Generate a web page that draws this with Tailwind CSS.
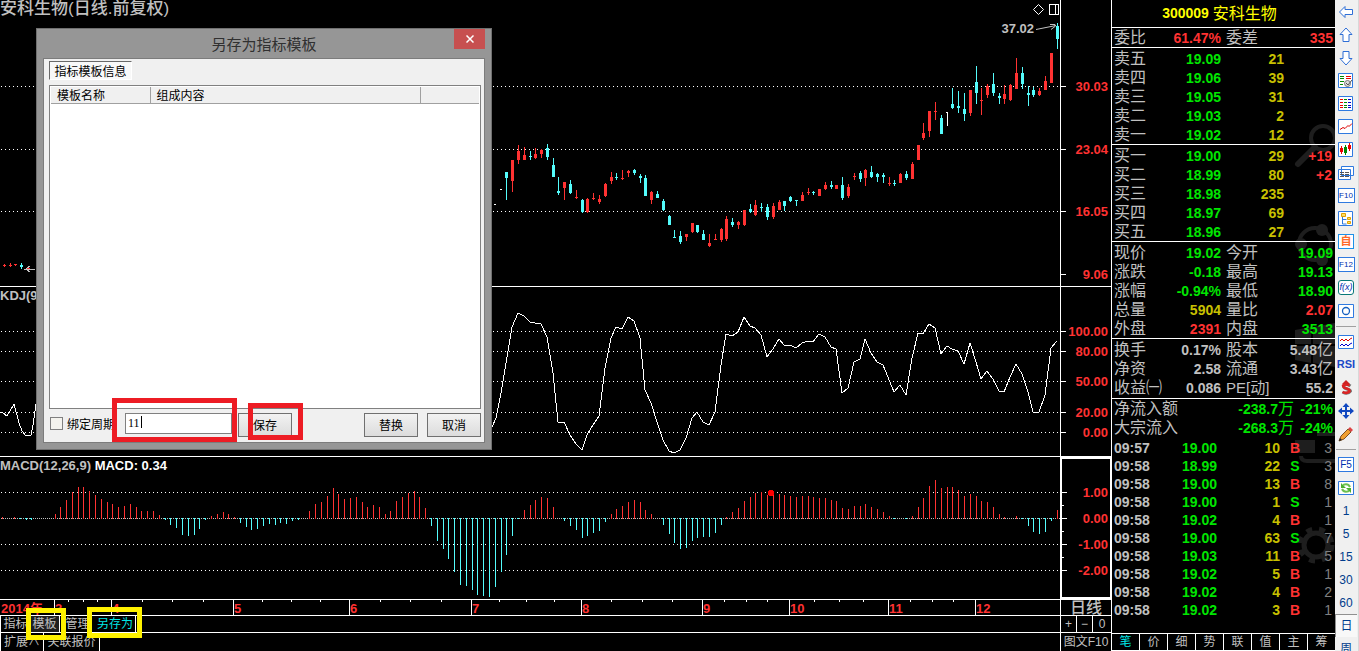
<!DOCTYPE html>
<html lang="zh-CN">
<head>
<meta charset="utf-8">
<title>安科生物 日线</title>
<script src="https://cdn.jsdelivr.net/npm/@tailwindcss/browser@4"></script>
</head>
<body class="h-screen overflow-hidden bg-black font-['Liberation_Sans','Noto_Sans_CJK_SC',sans-serif] text-[#c0c0c0]">
<div class="relative flex h-full overflow-hidden">

  <!-- Charts -->
  <main class="flex min-w-0 flex-1 flex-col">
    <section class="relative flex h-[287px] shrink-0 border-b border-white">
      <h1 class="absolute left-0 top-0 text-[17px] leading-[18px] font-medium">安科生物(日线.前复权)</h1>
      <div class="absolute right-[53px] top-[4px] flex items-center gap-[5px]">
        <svg width="11" height="11" viewBox="0 0 11 11" fill="none" stroke="#fff"><path d="M5.5 .5l5 5-5 5-5-5z"/></svg>
        <svg width="10" height="11" viewBox="0 0 10 11" fill="none" stroke="#fff" shape-rendering="crispEdges"><path d="M.5.5h9v10h-9zM6.500.5v10"/></svg>
      </div>
      <div class="absolute right-[52px] top-[20px] flex items-center">
        <span class="text-[13px] leading-[18px] font-bold">37.02</span>
        <svg width="26" height="14" viewBox="0 0 26 14" fill="none" stroke="#c0c0c0"><path d="M2 7.500L22 3.500M16 2.500h5v2l-4 3"/></svg>
      </div>
      <svg id="price" class="h-full min-w-0 flex-1" viewBox="0 0 1060 286" preserveAspectRatio="none" shape-rendering="crispEdges"></svg>
      <svg id="priceAxis" class="h-full w-[52px] border-x border-white" shape-rendering="crispEdges"></svg>
    </section>

    <section class="relative flex h-[170px] shrink-0 border-b border-white">
      <h2 class="absolute left-0 top-0 text-[13px] leading-[18px] font-bold">KDJ(9,3,3)</h2>
      <svg id="kdj" class="h-full min-w-0 flex-1" viewBox="0 287 1060 169" preserveAspectRatio="none" shape-rendering="crispEdges"></svg>
      <svg id="kdjAxis" class="h-full w-[52px] border-x border-white" shape-rendering="crispEdges"></svg>
    </section>

    <section class="relative flex h-[143px] shrink-0 border-b border-white">
      <h2 class="absolute left-0 top-0 text-[13px] leading-[18px] font-bold">MACD(12,26,9) <span class="text-white">MACD: 0.34</span></h2>
      <svg id="macd" class="h-full min-w-0 flex-1" viewBox="0 457 1060 142" preserveAspectRatio="none" shape-rendering="crispEdges"></svg>
      <svg id="macdAxis" class="h-full w-[52px] border-2 border-white" shape-rendering="crispEdges"></svg>
    </section>

    <section class="flex h-[16px] shrink-0 border-b border-white">
      <svg id="months" class="h-full min-w-0 flex-1" shape-rendering="crispEdges"></svg>
      <div class="flex w-[52px] items-center justify-center border-x border-white text-base leading-none font-medium">日线</div>
    </section>

    <section class="flex h-[17px] shrink-0 border-b border-white text-xs leading-4">
      <nav class="flex min-w-0 flex-1 border-l border-white">
        <button class="w-[29px]">指标</button>
        <button class="w-[30px] border-r border-white bg-[#202020]">模板</button>
        <button class="w-[35px]">管理</button>
        <button class="w-[41px] border-r border-white text-[#00e6e6]">另存为</button>
      </nav>
      <div class="flex w-[52px] divide-x divide-white border-x border-white">
        <button class="w-4">+</button><button class="w-4">−</button><button class="flex-1">0</button>
      </div>
    </section>

    <section class="flex min-h-0 flex-1 text-xs leading-[18px]">
      <nav class="flex min-w-0 flex-1 border-l border-white">
        <button class="w-[43px] border-r border-white">扩展∧</button>
        <button class="w-[56px] border-r border-white">关联报价</button>
      </nav>
      <button class="w-[52px] border-x border-white">图文F10</button>
    </section>
  </main>

  <!-- Quote panel -->
  <aside class="relative flex w-[223px] shrink-0 flex-col text-base leading-[19px]">
    <svg class="absolute right-0 top-0" width="44" height="600" viewBox="0 0 44 600" fill="none" stroke="#1e1e1e">
      <circle cx="32" cy="138" r="12" stroke-width="4"/><path d="M24 147L7 164" stroke-width="6" stroke-linecap="round"/>
      <circle cx="24" cy="244" r="16" stroke-width="4"/><g fill="#1e1e1e" stroke="none"><circle cx="31" cy="230" r="6"/><circle cx="10" cy="244" r="6"/><circle cx="31" cy="260" r="6"/>
      <path d="M4 330l16-3v17H4zM22 327l22-4v21H22zM4 346h16v17l-16-3zM22 346h22v21l-22-4z"/><path d="M4 440h20v13H4z"/></g>
      <path d="M10 456q0 5 6 5h28M26 434h18" stroke-width="4"/>
      <circle cx="25" cy="545" r="12" stroke-width="5"/><circle cx="25" cy="545" r="16" stroke-width="5" stroke-dasharray="6 7"/>
    </svg>
    <h2 class="relative flex h-7 shrink-0 items-center justify-center gap-1 border-b border-white pr-2 text-[#ffff00]"><span class="text-[14px] font-bold">300009</span>安科生物</h2>
    <div id="quotes" class="relative shrink-0"></div>
    <table id="ticks" class="relative mt-[2px] w-full shrink-0 table-fixed text-[14px] leading-[18px] font-bold">
      <colgroup><col class="w-[46px]"><col class="w-[59px]"><col class="w-[63px]"><col class="w-[30px]"><col></colgroup>
      <tbody></tbody>
    </table>
    <nav class="mt-auto flex shrink-0 divide-x divide-white border-y border-white text-xs leading-4">
      <button class="flex-1 text-[#00e6e6]">笔</button><button class="flex-1">价</button><button class="flex-1">细</button><button class="flex-1">势</button><button class="flex-1">联</button><button class="flex-1">值</button><button class="flex-1">主</button><button class="flex-1">筹</button>
    </nav>
  </aside>

  <!-- Tool strip -->
  <nav class="flex w-6 shrink-0 flex-col border-r border-[#d8d8d8] bg-[#f0f0f0] pr-px text-xs text-[#003c8c]">
    <button aria-label="后退" class="grid h-[23px] shrink-0 place-items-center"><svg width="16" height="16" viewBox="0 0 16 16" fill="#fff" stroke="#2f6fd6"><path d="M1.500 8L7 2.500v3h7.500v5H7v3z"/></svg></button>
    <button aria-label="上移" class="grid h-[23px] shrink-0 place-items-center"><svg width="16" height="16" viewBox="0 0 16 16" fill="#fff" stroke="#2f6fd6"><path d="M8 1L2 7.500h3v7h6v-7h3z"/></svg></button>
    <button aria-label="下移" class="grid h-[23px] shrink-0 place-items-center"><svg width="16" height="16" viewBox="0 0 16 16" fill="#fff" stroke="#2f6fd6"><path d="M8 15L2 8.500h3v-7h6v7h3z"/></svg></button>
    <button aria-label="报价设置" class="grid h-[23px] shrink-0 place-items-center"><svg width="16" height="16" viewBox="0 0 16 16" fill="none"><path d="M.5.5h14v14H.5z" fill="#fff" stroke="#2f7ae0"/><path d="M2 3.500h4M2 5.500h4M2 8.500h4M2 11.500h3" stroke="#080"/><path d="M8 3.500h5M8 5.500h5" stroke="#e00"/><circle cx="9.500" cy="10.500" r="3" fill="#ddd" stroke="#777"/><path d="M8 10l2 2 4-5" stroke="#555"/></svg></button>
    <button aria-label="报价列表" class="grid h-[23px] shrink-0 place-items-center"><svg width="16" height="16" viewBox="0 0 16 16" fill="none"><path d="M.5.5h14v14H.5z" fill="#fff" stroke="#2f7ae0"/><path d="M2 3.500h3M2 6.500h3M2 9.500h3M2 11.500h3" stroke="#e00"/><path d="M6 3.500h3M6 6.500h3M6 9.500h3M6 11.500h3" stroke="#080"/><path d="M10 3.500h3M10 6.500h3M10 9.500h3M10 11.500h3" stroke="#00c"/></svg></button>
    <button aria-label="分时图" class="grid h-[23px] shrink-0 place-items-center"><svg width="16" height="16" viewBox="0 0 16 16" fill="none"><path d="M.5.5h14v14H.5z" fill="#fff" stroke="#2f7ae0"/><path d="M2 10.500l3-2 2 1 3-3 1 1 3-3" stroke="#d00"/></svg></button>
    <button aria-label="K线图" class="grid h-[23px] shrink-0 place-items-center"><svg width="16" height="16" viewBox="0 0 16 16" fill="none"><path d="M.5.5h14v14H.5z" fill="#fff" stroke="#2f7ae0"/><path d="M3.500 4v8M11.500 1v8" stroke="#e00"/><path d="M2 6h3v4H2zM10 3h3v4h-3z" fill="#e00"/><path d="M7.500 3v10" stroke="#080"/><path d="M6 5h3v6H6z" fill="#080"/></svg></button>
    <button aria-label="多窗口" class="grid h-[23px] shrink-0 place-items-center"><svg width="16" height="16" viewBox="0 0 16 16" fill="#fff" stroke="#2f7ae0"><path d="M3.500 1.500h12v9h-12zM.5 4.500h12v10H.5z"/><path d="M2 7.500h9M2 9.500h9M2 11.500h9" stroke="#555" stroke-dasharray="4 1"/></svg></button>
    <button class="grid h-[23px] shrink-0 place-items-center"><span class="h-[15px] w-[17px] border border-[#2f7ae0] bg-white text-[8px] leading-[14px] text-[#0030b0]">F10</span></button>
    <button aria-label="板块树" class="grid h-[23px] shrink-0 place-items-center"><svg width="16" height="16" viewBox="0 0 16 16" fill="none"><path d="M.5.5h14v14H.5z" fill="#fff" stroke="#2f7ae0"/><path d="M4.500 6v7h4M4.500 8.500h4" stroke="#2f7ae0"/><path d="M3.500 2.500h4v3h-4zM9.500 6.500h3v2h-3zM9.500 10.500h3v2h-3z" fill="#fd6" stroke="#e0a000"/></svg></button>
    <button class="grid h-[23px] shrink-0 place-items-center"><span class="h-[15px] w-4 border border-[#1d90e8] bg-white text-[11px] leading-[13px] font-bold text-[#ff6a28]">自</span></button>
    <button class="grid h-[23px] shrink-0 place-items-center"><span class="h-[15px] w-[17px] border border-[#2f7ae0] bg-white text-[8px] leading-[14px] text-[#0030b0]">F12</span></button>
    <button class="grid h-[23px] shrink-0 place-items-center"><span class="h-[15px] w-4 rounded-[3px] border border-[#087878] bg-white text-[9px] leading-[13px] text-[#0030b0] italic">f(x)</span></button>
    <button aria-label="圆" class="grid h-[23px] shrink-0 place-items-center"><svg width="16" height="16" viewBox="0 0 16 16"><path d="M.5 1.500h15v13H.5z" fill="#fff" stroke="#2f7ae0"/><circle cx="8" cy="8" r="3.500" fill="none" stroke="#1560c0" stroke-width="1.300"/></svg></button>
    <hr class="mx-px mt-1 mb-[3px] shrink-0 border-[#a0a0a0]">
    <button aria-label="叠加" class="grid h-[23px] shrink-0 place-items-center"><svg width="16" height="16" viewBox="0 0 16 16" fill="none"><path d="M.5 1.500h15v13H.5z" fill="#fff" stroke="#2f7ae0"/><path d="M2 7l2-2 2 2 2-2 2 2 2-2 2-1" stroke="#d00"/><path d="M2 12l2-2 2 2 2-2 2 2 2-2 2-1" stroke="#00c"/></svg></button>
    <button class="h-[23px] shrink-0 text-[11px] font-bold text-[#1a48c8]">RSI</button>
    <button aria-label="选股" class="grid h-[23px] shrink-0 place-items-center"><svg width="16" height="16" viewBox="0 0 16 16" fill="none"><path d="M12.500 6q-4-3-7 0 0 2 3.500 3t3.500 2q-3 4-8 1" stroke="#777" stroke-width="3"/><path d="M11.500 5.500q-4-2-6.500 0 0 2 3.500 3t3 3q-3 2.500-7 .5" stroke="#d22" stroke-width="2.500"/><path d="M8 0l4 4H4z" fill="#c22"/></svg></button>
    <button aria-label="移动" class="grid h-[23px] shrink-0 place-items-center"><svg width="16" height="16" viewBox="0 0 16 16" fill="#1048c0"><path d="M8 0l3.500 4H9v3h3V4.500L16 8l-4 3.500V9H9v3h2.500L8 16l-3.500-4H7V9H4v2.500L0 8l4-3.500V7h3V4H4.500z"/></svg></button>
    <button aria-label="画线" class="grid h-[23px] shrink-0 place-items-center"><svg width="16" height="16" viewBox="0 0 16 16"><path d="M1 15l2-5 7-7 3 3-7 7z" fill="#f0a030" stroke="#805020"/><path d="M10 3l2-2 3 3-2 2z" fill="#d44"/><path d="M1 15l1-3 2 2z" fill="#222"/></svg></button>
    <hr class="mx-px mt-1 mb-[3px] shrink-0 border-[#a0a0a0]">
    <button class="grid h-[23px] shrink-0 place-items-center"><span class="h-[15px] w-4 border border-[#2f7ae0] bg-white text-[10px] leading-[14px] text-[#0030b0]">F5</span></button>
    <button aria-label="刷新" class="grid h-[23px] shrink-0 place-items-center"><svg width="16" height="16" viewBox="0 0 16 16" fill="none"><path d="M.5 1.500h15v13H.5z" fill="#fff" stroke="#2f7ae0"/><path d="M12 7q-2-4-7-2M4 9q2 4 7 2" stroke="#6cc050" stroke-width="2"/><path d="M3 3v5h5zM13 13V8H8z" fill="#4db030"/></svg></button>
    <button class="h-[23px] shrink-0">1</button>
    <button class="h-[23px] shrink-0">5</button>
    <button class="h-[23px] shrink-0">15</button>
    <button class="h-[23px] shrink-0">30</button>
    <button class="h-[23px] shrink-0">60</button>
    <button class="h-[23px] shrink-0 border-t border-l border-[#909090] bg-[#f8f8f8]">日</button>
    <button class="h-[23px] shrink-0">周</button>
  </nav>

  <!-- Save-template dialog -->
  <div role="dialog" aria-labelledby="dlgTitle" class="absolute left-[36px] top-[28px] flex w-[456px] flex-col border border-[#707070] bg-[#969696] px-[6px] pb-[6px] font-['Noto_Sans_CJK_SC',sans-serif] text-xs text-black">
    <header class="relative flex h-[29px] items-center justify-center">
      <h2 id="dlgTitle" class="text-[15px] text-[#303030]">另存为指标模板</h2>
      <button aria-label="关闭" class="absolute right-0 top-0 grid h-5 w-[31px] place-items-center bg-[#c75050]"><svg width="8" height="8" viewBox="0 0 8 8" stroke="#fff" stroke-width="1.500"><path d="M.5.5l7 7M7.500.5l-7 7"/></svg></button>
    </header>
    <div class="border border-[#7c7c7c] bg-[#f0f0f0] pt-[2px] pr-[3px] pb-1 pl-[5px]">
      <button class="block h-[19px] w-[83px] border border-t-[#696969] border-l-[#696969] border-r-white border-b-white bg-[#f8f8f8] leading-4">指标模板信息</button>
      <div class="mt-[5px] h-[324px] border border-[#808080] bg-white p-px">
        <table class="w-full table-fixed text-left leading-[15px]">
          <colgroup><col class="w-[99px]"><col class="w-[270px]"><col></colgroup>
          <thead><tr class="h-4 border-b border-[#a0a0a0] bg-[#f0f0f0]"><th class="border-r border-[#a0a0a0] pl-[6px] font-normal">模板名称</th><th class="border-r border-[#a0a0a0] pl-[6px] font-normal">组成内容</th><th></th></tr></thead>
        </table>
      </div>
      <div class="flex h-[29px] items-start pt-1">
        <label class="ml-px flex h-[21px] w-[75px] items-center gap-1 whitespace-nowrap"><input type="checkbox" class="h-[13px] w-[13px] shrink-0 appearance-none border border-[#808080] bg-[#f4f3ee]">绑定周期</label>
        <input type="text" aria-label="模板名称" value="11" class="h-[21px] w-[107px] border border-[#808080] bg-white pl-[2px] font-['Liberation_Serif',serif] text-xs outline-none">
        <button class="ml-[6px] h-6 w-[54px] border border-[#707070] bg-linear-to-b from-[#f2f2f2] to-[#dcdcdc]">保存</button>
        <button class="ml-auto h-6 w-[54px] border border-[#707070] bg-linear-to-b from-[#f2f2f2] to-[#dcdcdc]">替换</button>
        <button class="ml-[9px] h-6 w-[54px] border border-[#707070] bg-linear-to-b from-[#f2f2f2] to-[#dcdcdc]">取消</button>
      </div>
    </div>
  </div>

  <!-- Text caret and highlight frames -->
  <div class="absolute left-[141px] top-[416px] h-3 w-px bg-black"></div>
  <div class="absolute left-[112px] top-[398px] h-[44px] w-[125px] border-5 border-[#ed1c24]"></div>
  <div class="absolute left-[248px] top-[403px] h-[37px] w-[55px] border-5 border-[#ed1c24]"></div>
  <div class="absolute left-[26px] top-[608px] h-8 w-10 border-5 border-[#fff200]"></div>
  <div class="absolute left-[87px] top-[607px] h-[31px] w-[55px] border-5 border-[#fff200]"></div>
</div>

<script>
const RED = '#ff3232', CYAN = '#54fcfc';
const $ = id => document.getElementById(id);
const grid = (ys, step = 3, color = '#fff') => ys.map(y => `<path d="M1 ${y}.5H1060" stroke="${color}" stroke-dasharray="1 ${step}"/>`).join('');
const box = (x, y, w, h, c) => `<rect x="${x}" y="${y}" width="${w}" height="${h}" fill="${c}"/>`;

// Each candle: colour, x, high, body top, body bottom, low
const candles = `C506,172,172,178,200 R512,160,160,181,192 R518,145,151,160,164 R524,147,155,160,160 C530,151,156,157,160 R535,148,154,158,159 R541,149,150,154,158 C547,144,148,157,160 C553,158,165,177,177 C558,177,191,193,195 R564,182,182,188,200 C570,180,184,193,194 R576,190,197,198,199 C582,199,200,212,213 R587,198,199,212,213 R593,193,198,199,200 R599,195,199,202,204 R605,183,184,196,197 R611,172,177,181,184 C616,173,177,178,180 R622,170,178,179,180 R628,170,171,173,177 C634,169,170,173,175 C640,174,176,178,183 C645,175,178,196,196 R651,191,192,200,204 C657,191,194,198,198 C663,199,201,210,211 C669,215,216,225,225 C674,230,237,238,238 C680,231,236,242,244 R686,234,234,237,241 R692,223,223,232,233 C697,225,225,232,233 C703,230,234,240,240 R709,234,243,246,247 R715,234,239,240,240 R721,228,229,240,242 R726,216,219,239,241 C732,218,222,225,227 R738,221,222,225,229 R744,210,210,225,226 C750,204,209,212,213 R755,200,205,215,216 C761,203,207,208,212 C767,204,207,217,220 R773,203,206,217,219 R779,200,202,210,210 C784,201,201,206,211 C790,196,197,201,202 C796,200,200,201,206 R802,192,195,201,201 R808,188,192,193,195 C813,191,192,193,195 R819,189,189,196,196 R825,182,185,189,190 C831,181,185,187,189 R836,185,185,189,189 C842,177,185,198,200 R848,184,187,196,198 R854,173,176,177,180 C860,171,173,179,182 R865,169,170,178,186 C871,166,172,177,178 C877,173,174,177,182 C883,173,175,177,183 R889,177,183,184,186 C894,180,183,184,186 R900,173,174,183,183 C906,171,174,178,180 R912,162,164,179,179 R918,145,145,160,160 R923,123,133,138,140 R929,111,111,131,137 R935,102,111,112,120 C941,115,118,134,134 W947,112,112,113,126 C952,88,104,108,109 C958,91,106,108,113 C964,93,109,114,121 R970,90,90,113,116 C976,66,82,93,104 R981,88,100,101,115 R987,84,86,95,98 C993,73,84,93,96 C999,93,96,98,104 R1004,85,94,99,104 R1010,84,85,100,101 R1016,58,73,89,89 C1022,67,73,84,89 C1028,86,93,95,106 C1033,87,90,95,97 R1039,88,91,95,96 R1045,76,81,90,90 R1051,53,53,83,83 C1057,23,26,39,49 R4,264,265,266,267 R10,263,265,266,267 R15,264,264,265,266 C21,263,265,267,269 R28,266,268,269,270`.split(/\s+/);
$('price').innerHTML = grid([86, 149, 211]) + candles.map(s => {
  const [x, hi, top, bot, lo] = s.slice(1).split(',').map(Number);
  const c = { R: RED, C: CYAN, W: '#fff' }[s[0]];
  return box(x, hi, 1, lo - hi, c) + box(x - 1, top, s[0] === 'W' ? 2 : 3, bot - top, c);
}).join('') + box(494, 204, 2, 1, '#fff') + box(500, 189, 2, 1, '#fff') + '<path d="M35 269H26l4-3m-4 3l4 3" fill="none" stroke="#c0c0c0"/>';

$('kdj').innerHTML = grid([331, 351, 381, 412, 432]) + `<g fill="none" stroke="#fff"><polyline points="0,412 3,413 7,416 14,404 19,423 22,431 26,436 31,435 33,425 36,404"/><polyline points="492,427 496,418 501,393 512,327 518,313 524,316 530,322 535,323 541,324 547,337 553,373 558,422 564,422 570,435 576,444 582,450 587,435 593,425 599,416 605,368 611,338 616,327 622,329 628,317 634,321 640,338 645,390 651,403 657,422 663,440 669,451 674,453 680,450 686,438 692,418 697,412 703,422 709,425 715,412 721,365 726,334 732,336 738,332 744,317 750,326 755,328 761,335 767,357 773,349 779,339 784,345 790,345 796,348 802,343 808,341 813,342 819,334 825,337 831,347 836,349 842,393 848,388 854,362 860,359 865,339 871,353 877,362 883,365 894,392 900,385 906,395 912,358 918,333 923,334 929,324 935,328 941,354 947,346 952,349 958,351 964,364 970,343 976,362 981,379 987,371 993,379 999,391 1004,392 1010,377 1016,364 1022,374 1028,392 1033,412 1039,412 1045,395 1051,348 1057,341"/></g>`;

// MACD histogram: x, bar end; the zero line is y = 518
const bars = `2,517 14,517 20,519 26,520 31,520 55,514 60,507 66,500 72,492 78,487 83,487 89,491 95,495 101,499 107,502 112,504 118,507 124,506 130,504 136,507 141,511 147,511 153,511 159,515 165,520 170,525 176,528 182,535 188,536 194,535 199,529 205,520 211,516 217,514 223,512 228,514 234,517 240,523 246,527 251,530 257,529 263,526 269,524 275,525 280,523 286,524 292,521 298,520 309,511 315,504 321,502 327,496 333,488 338,494 344,499 350,498 356,497 362,502 367,507 373,505 379,507 385,514 390,511 396,501 402,497 408,493 414,491 419,497 425,508 431,526 437,541 443,549 448,559 454,572 460,585 466,586 472,590 477,595 483,596 489,597 495,587 501,572 506,555 512,536 518,519 524,510 530,505 535,500 541,497 547,498 553,507 564,521 570,526 576,530 582,538 587,536 593,533 599,531 605,522 611,514 616,509 622,506 628,502 634,500 640,502 645,510 651,514 663,525 669,534 674,543 680,549 686,548 692,541 697,538 703,537 709,537 715,533 721,525 726,517 732,512 738,508 744,501 750,497 755,493 761,492 767,495 773,495 779,494 784,495 790,496 796,497 802,496 808,496 813,497 819,498 825,498 831,500 836,501 842,508 848,509 854,506 860,506 865,504 871,507 877,509 883,512 889,516 894,519 906,519 912,516 918,507 923,498 929,486 935,480 941,488 947,487 952,487 958,490 964,496 970,494 976,496 981,501 987,502 993,507 999,514 1004,517 1016,516 1022,519 1028,526 1033,532 1039,534 1045,532 1051,521 1057,510`.split(' ').map(s => s.split(',').map(Number));
$('macd').innerHTML = grid([492, 544, 570]) + grid([518], 1, '#c0c0c0') + bars.map(([x, y]) => y < 518 ? box(x, y, 1, 519 - y, RED) : box(x, 518, 1, y - 518, CYAN) + box(x - 1, 518, 2, 1, CYAN)).join('') + '<circle cx="771" cy="493" r="3" fill="#f00"/>';

const axis = (id, labels, off, right, minor = []) => $(id).innerHTML =
  labels.map(([y, t]) => box(0, y - off, 5, 1, '#fff') + `<text x="${right}" y="${y - off + 5}" text-anchor="end" font-size="13" font-weight="700" fill="${RED}">${t}</text>`).join('') +
  minor.map(y => box(0, y - off, 2, 1, '#fff')).join('');
axis('priceAxis', [[86, '30.03'], [149, '23.04'], [211, '16.05'], [274, '9.06']], 0, 47);
axis('kdjAxis', [[331, '100.00'], [351, '80.00'], [381, '50.00'], [412, '20.00'], [432, '0.00']], 287, 47);
axis('macdAxis', [[492, '1.00'], [518, '0.00'], [544, '-1.00'], [570, '-2.00']], 459, 46, [505, 531, 557]);

const pct = x => (x / 10.6) + '%';
$('months').innerHTML = [[0, '2014年'], [54, '3'], [111, '4'], [233, '5'], [349, '6'], [471, '7'], [581, '8'], [702, '9'], [789, '10'], [888, '11'], [975, '12']]
  .map(([x, t]) => (x ? box(pct(x), 0, 1, 16, '#fff') : '') + `<text x="${pct(x + 1)}" y="13" font-size="13" font-weight="700" fill="${RED}">${t}</text>`).join('') +
  [68, 83, 97, 142, 172, 203, 262, 291, 320, 380, 410, 441, 499, 526, 554, 611, 642, 672, 724, 746, 767, 814, 839, 863, 910, 932, 953].map(x => box(pct(x), 0, 1, 2, '#fff')).join('');

const tone = { g: 'text-[#00e600]', r: 'text-[#ff3232]', y: 'text-[#c8c000]', w: 'text-[#c0c0c0]' };
const num = v => v ? `<span class="text-[14px] leading-none font-bold ${tone[v[0]]}">${v.slice(1).replace(/[亿万]/, '<span class="text-[16px] font-normal">$&</span>')}</span>` : '';
const book = rows => `<table class="w-full table-fixed"><colgroup><col class="w-[50px]"><col class="w-[59px]"><col class="w-[63px]"><col></colgroup>` +
  rows.map(([l, p, v, d]) => `<tr class="h-[19px] leading-[17px]"><th class="pl-[2px] text-left font-normal">${l}</th><td class="text-right">${num(p)}</td><td class="text-right">${num(v)}</td><td class="pr-[3px] text-right">${num(d)}</td></tr>`).join('') + '</table>';
const pairs = rows => `<table class="w-full table-fixed"><colgroup><col class="w-[50px]"><col class="w-[59px]"><col class="w-[47px]"><col></colgroup>` +
  rows.map(([l, a, m, b]) => `<tr class="h-[19px] leading-[17px] whitespace-nowrap"><th class="pl-[2px] text-left font-normal">${l}</th><td class="text-right">${num(a)}</td><th class="pl-[5px] text-left font-normal">${m}</th><td class="pr-[2px] text-right">${num(b)}</td></tr>`).join('') + '</table>';
const flow = rows => `<table class="w-full table-fixed"><colgroup><col class="w-[80px]"><col class="w-[102px]"><col></colgroup>` +
  rows.map(([l, a, b]) => `<tr class="h-[19px] leading-[17px] whitespace-nowrap"><th class="pl-[2px] text-left font-normal">${l}</th><td class="text-right">${num(a)}</td><td class="pr-[2px] text-right">${num(b)}</td></tr>`).join('') + '</table>';
$('quotes').innerHTML =
  `<div class="border-b border-white">${pairs([['委比', 'r61.47%', '委差', 'r335']])}</div>` +
  `<div class="border-b border-white pt-px">${book([['卖五', 'g19.09', 'y21'], ['卖四', 'g19.06', 'y39'], ['卖三', 'g19.05', 'y31'], ['卖二', 'g19.03', 'y2'], ['卖一', 'g19.02', 'y12']])}</div>` +
  `<div class="border-b border-white pt-px">${book([['买一', 'g19.00', 'y29', 'r+19'], ['买二', 'g18.99', 'y80', 'r+2'], ['买三', 'g18.98', 'y235'], ['买四', 'g18.97', 'y69'], ['买五', 'g18.96', 'y27']])}</div>` +
  `<div class="border-b border-white pt-px">${pairs([['现价', 'g19.02', '今开', 'g19.09'], ['涨跌', 'g-0.18', '最高', 'g19.13'], ['涨幅', 'g-0.94%', '最低', 'g18.90'], ['总量', 'y5904', '量比', 'r2.07'], ['外盘', 'r2391', '内盘', 'g3513']])}</div>` +
  `<div class="border-b border-white pt-px pb-px">${pairs([['换手', 'w0.17%', '股本', 'w5.48亿'], ['净资', 'w2.58', '流通', 'w3.43亿'], ['收益㈠', 'w0.086', '<span class="text-[15px] leading-none">PE[动]</span>', 'w55.2']])}</div>` +
  flow([['净流入额', 'g-238.7万', 'g-21%'], ['大宗流入', 'g-268.3万', 'g-24%']]);
$('ticks').tBodies[0].innerHTML = [['09:57', '19.00', 10, 'B', 3], ['09:58', '18.99', 22, 'S', 3], ['09:58', '19.00', 13, 'B', 8], ['09:58', '19.00', 1, 'S', 1], ['09:58', '19.02', 4, 'B', 1], ['09:58', '19.00', 63, 'S', 7], ['09:58', '19.03', 11, 'B', 5], ['09:58', '19.02', 5, 'B', 1], ['09:58', '19.02', 4, 'B', 2], ['09:58', '19.02', 3, 'B', 1]]
  .map(([t, p, v, s, n]) => `<tr class="h-[18px]"><td class="pl-[2px]">${t}</td><td class="text-right text-[#00e600]">${p}</td><td class="text-right text-[#c8c000]">${v}</td><td class="text-center ${s === 'B' ? tone.r : tone.g}">${s}</td><td class="pr-[3px] text-right font-normal text-[#808080]">${n}</td></tr>`).join('');
</script>
</body>
</html>
